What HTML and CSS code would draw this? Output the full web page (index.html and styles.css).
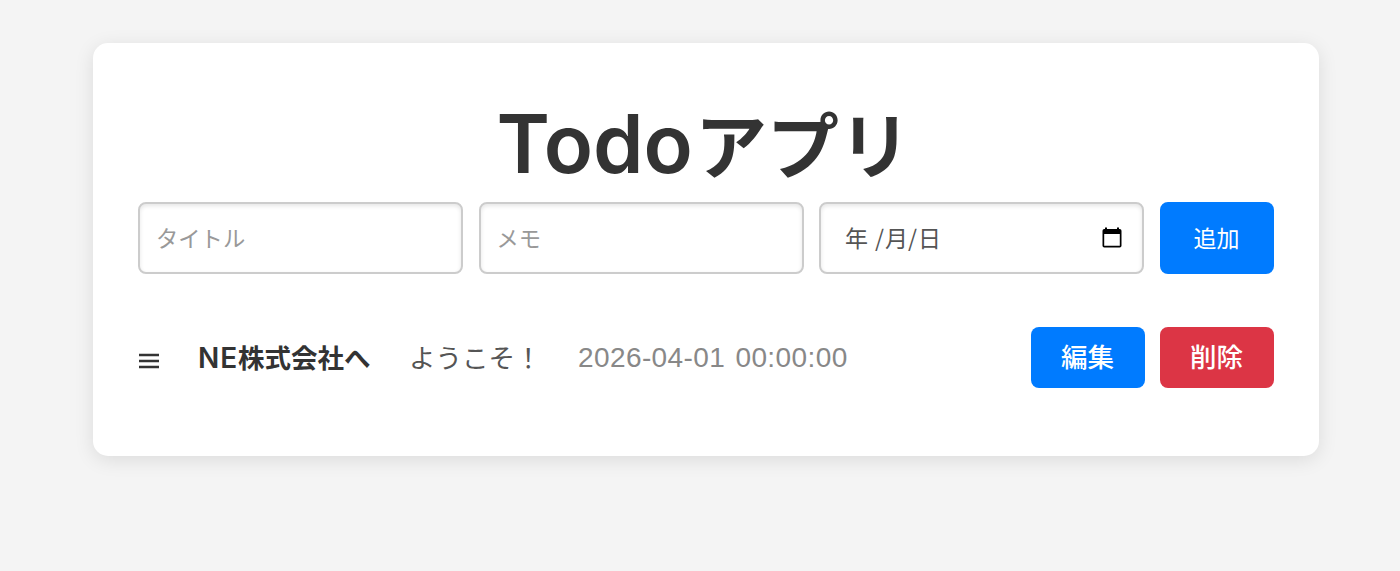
FILE: index.html
```html
<!DOCTYPE html>
<html lang="ja">
<head>
<meta charset="utf-8">
<title>Todoアプリ</title>
<link rel="stylesheet" href="styles.css">
</head>
<body>
<main class="card">
  <h1 class="title"><span class="title-latin">Todo</span><span class="title-kana">アプリ</span></h1>
  <form class="form">
    <div class="field"><span class="placeholder">タイトル</span></div>
    <div class="field"><span class="placeholder">メモ</span></div>
    <div class="field date">
      <span class="date-text"><span class="year">年</span><span class="slash">/</span><span>月</span><span class="slash">/</span><span>日</span></span>
      <svg class="calendar" width="20" height="22" viewBox="0 0 20 22"><path fill="#000" fill-rule="evenodd" d="M3 .5h2V2h10V.5h2V2h.7A1.8 1.8 0 0 1 19.500 3.800V18.700A1.800 1.800 0 0 1 17.700 20.500H2.300A1.800 1.800 0 0 1 .500 18.700V3.800A1.800 1.800 0 0 1 2.300 2H3ZM2.200 7v11.800h15.600V7Z"/></svg>
    </div>
    <button class="button" type="button">追加</button>
  </form>
  <div class="item">
    <svg class="handle" width="21" height="16" viewBox="0 0 21 16"><path d="M0 2h20M0 8h20M0 14h20" stroke="#333" stroke-width="2.700"/></svg>
    <span class="name"><span class="name-latin">NE</span>株式会社へ</span>
    <span class="memo">ようこそ！</span>
    <span class="time">2026-04-01 00:00:00</span>
    <div class="actions">
      <button class="button edit" type="button">編集</button>
      <button class="button delete" type="button">削除</button>
    </div>
  </div>
</main>
</body>
</html>
```
FILE: styles.css
```css
* { box-sizing: border-box; }
body {
  min-height: 571px;
  margin: 0;
  padding: 43px 81.500px 0 93px;
  background: #f4f4f4;
  color: #333;
  font-family: "Liberation Sans", "Noto Sans CJK JP", sans-serif;
}
.card {
  height: 413px;
  padding: 52px 45px 0 45px;
  background: #fff;
  border-radius: 15px;
  box-shadow: 0 4px 19px rgba(0, 0, 0, .1);
}
.title {
  display: flex;
  justify-content: center;
  align-items: baseline;
  height: 90px;
  margin: 0 0 17px;
  padding-right: 4px;
  font: 700 72px/94px "Noto Sans CJK JP", sans-serif;
  white-space: nowrap;
}
.title-latin {
  margin-right: 2px;
  font: 600 81px/90px Inter, sans-serif;
  letter-spacing: 0;
}
.form {
  display: grid;
  grid-template-columns: repeat(3, 1fr) 114px;
  gap: 15.500px;
  height: 72px;
}
.field {
  display: flex;
  align-items: center;
  padding: 0 16px 2px;
  border: 2px solid #ccc;
  border-radius: 8px;
  box-shadow: inset 0 2px 4px rgba(0, 0, 0, .1);
  font: 400 23px/34px "Noto Sans CJK JP", sans-serif;
}
.placeholder { color: #999; font-size: 22.300px; }
.date { justify-content: space-between; padding: 0 20px 2px 24px; color: #555; }
.date-text { display: flex; }
.calendar { margin-top: 2px; }
.year { margin-right: 7px; }
.slash { width: 10px; }
.button {
  display: flex;
  justify-content: center;
  align-items: center;
  width: 114px;
  padding: 0 0 2px;
  border: 0;
  border-radius: 8px;
  background: #007bff;
  color: #fff;
  font: 400 23px/34px "Noto Sans CJK JP", sans-serif;
}
.item {
  display: flex;
  align-items: center;
  height: 61px;
  margin-top: 53px;
  font: 400 26.500px/40px "Noto Sans CJK JP", sans-serif;
  white-space: nowrap;
}
.handle { margin: 7px 38px 0 1px; }
.name { width: 211px; padding-bottom: 2px; font-weight: 700; }
.name-latin { font: 600 28px/30px Inter, sans-serif; letter-spacing: .9px; }
.memo { width: 169px; padding-bottom: 2px; color: #555; }
.time {
  color: #888;
  font-family: "Liberation Sans", sans-serif;
  font-size: 28px;
  letter-spacing: .400px;
  word-spacing: 2px;
}
.actions { display: flex; gap: 15px; margin-left: auto; }
.edit, .delete { height: 61px; padding-bottom: 3px; font-size: 26.500px; font-weight: 500; }
.delete { background: #dc3545; }
```
